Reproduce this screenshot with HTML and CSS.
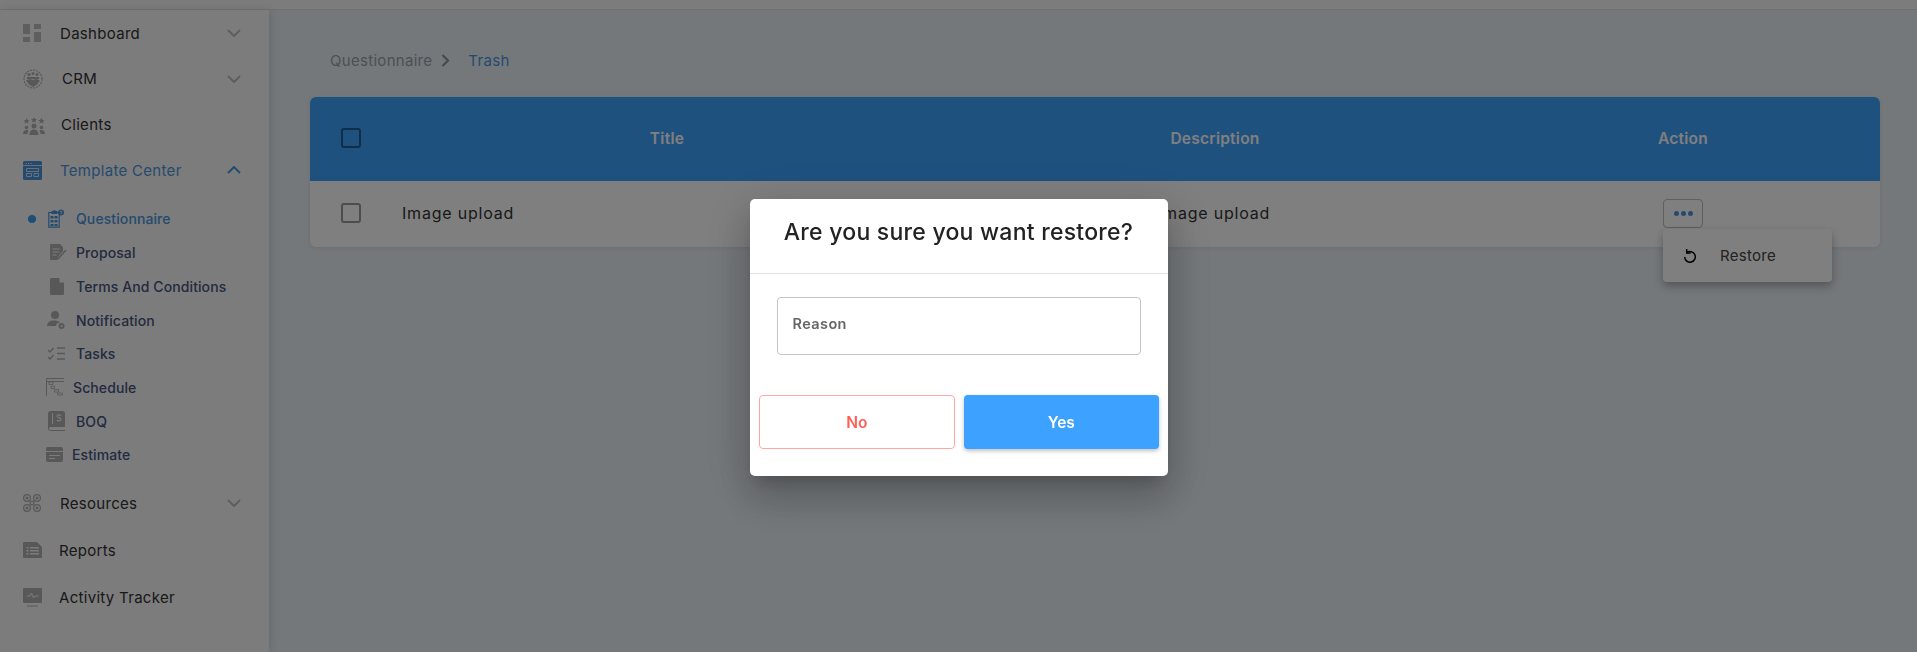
FILE: index.html
```html
<!DOCTYPE html>
<html lang="en">
<head>
  <meta charset="UTF-8">
  <meta name="viewport" content="width=device-width, initial-scale=1.0">
  <title>Questionnaire Trash</title>
  <link rel="stylesheet" href="styles.css">
</head>
<body>

  <div class="topbar"></div>

  <div class="layout">
    <aside class="sidebar">
      <a class="nav-item">
        <svg class="nav-icon" width="18" height="18" viewBox="0 0 18 18"><path fill="#bcbcbc" d="M0 0h7v10H0zM11 0h7v5h-7zM0 13h7v5H0zM11 8h7v10h-7z"/></svg>
        <span class="nav-label label-dashboard">Dashboard</span>
        <svg class="chevron" width="14" height="8" viewBox="0 0 14 8"><path d="M1 1l6 6 6-6" fill="none" stroke="#bcbcbc" stroke-width="2"/></svg>
      </a>
      <a class="nav-item">
        <svg class="nav-icon" width="20" height="22" viewBox="0 0 20 22"><circle cx="10" cy="11" r="9" fill="none" stroke="#b0b0b0" stroke-width="1.200" stroke-dasharray="2 1"/><circle cx="6" cy="6.500" r="1.500" fill="#b0b0b0"/><circle cx="10" cy="5.500" r="1.500" fill="#b0b0b0"/><circle cx="14" cy="6.500" r="1.500" fill="#b0b0b0"/><path fill="#b0b0b0" d="M4 9h12v2H4zM3 12.500l4-1.500 3 1 3-1 4 1.500-3 4-4 2.500-4-2.500z"/></svg>
        <span class="nav-label label-crm">CRM</span>
        <svg class="chevron" width="14" height="8" viewBox="0 0 14 8"><path d="M1 1l6 6 6-6" fill="none" stroke="#bcbcbc" stroke-width="2"/></svg>
      </a>
      <a class="nav-item">
        <svg class="nav-icon" width="22" height="21" viewBox="0 0 22 21"><path fill="#b0b0b0" d="M3.500 4l1 2h2l-1.500 1.500.5 2-2-1-2 1 .5-2L1 6h2zM11 3l1 2h2l-1.500 1.500.5 2-2-1-2 1 .5-2L8 5h2zM18.500 4l1 2h2l-1.500 1.500.5 2-2-1-2 1 .5-2L15 6h2z"/><circle cx="11" cy="12" r="2.500" fill="#b0b0b0"/><path fill="#b0b0b0" d="M6.500 21c0-3.500 2-5.500 4.500-5.500s4.500 2 4.500 5.500z"/><circle cx="3.500" cy="13.500" r="1.800" fill="#b0b0b0"/><circle cx="18.500" cy="13.500" r="1.800" fill="#b0b0b0"/><path fill="#b0b0b0" d="M0 20c0-2.500 1.500-4 3.500-4 1 0 1.500.3 2 .8-.7 1-1 2-1 3.200zM22 20c0-2.500-1.500-4-3.500-4-1 0-1.500.3-2 .8.700 1 1 2 1 3.200z"/></svg>
        <span class="nav-label label-clients">Clients</span>
      </a>
      <a class="nav-item is-active">
        <svg class="nav-icon" width="19" height="19" viewBox="0 0 19 19"><path fill="#4a95dc" d="M1.500 0h16A1.500 1.500 0 0 1 19 1.500V17.500A1.500 1.500 0 0 1 17.500 19h-16A1.500 1.500 0 0 1 0 17.500V1.500A1.500 1.500 0 0 1 1.500 0z"/><path fill="none" stroke="#f8f8f8" stroke-width=".8" d="M0 4.500h19M3.500 7.500h12v3h-12zM3.500 12.500h5v3h-5zM11 12.500h4.500v3H11z"/><path fill="#f8f8f8" d="M2.500 2h1v1h-1zM5 2h1v1H5zM7.500 2h1v1h-1z"/></svg>
        <span class="nav-label label-template">Template Center</span>
        <svg class="chevron" width="14" height="8" viewBox="0 0 14 8"><path d="M1 7l6-6 6 6" fill="none" stroke="#4a95dc" stroke-width="2"/></svg>
      </a>

      <ul class="subnav">
        <li class="sub-item is-active">
          <span class="dot"></span>
          <svg class="icon-q" width="16" height="19" viewBox="0 0 16 19"><path fill="none" stroke="#4a95dc" stroke-width="1.200" d="M.8 3.500h10.400v14.700H.8z"/><path fill="#4a95dc" d="M3.500 2h2a1 1 0 0 1 2 0h2v3h-6zM2.500 7h3v2.500h-3zM6.500 7h3v2.500h-3zM2.500 11h3v2.500h-3zM6.500 11h3v2.500h-3zM2.500 15h3v2h-3zM6.500 15h3v2h-3z"/><circle cx="13" cy="3.500" r="3" fill="#4a95dc"/><path d="M12 3a1 1 0 1 1 1 1v.8" fill="none" stroke="#f8f8f8" stroke-width=".7"/></svg>
          <span>Questionnaire</span>
        </li>
        <li class="sub-item">
          <svg class="icon-p" width="17" height="17" viewBox="0 0 17 17"><path fill="#b0b0b0" d="M1 0h9l3 3v4l-5 6-.5 3H1a1 1 0 0 1-1-1V1a1 1 0 0 1 1-1z"/><path stroke="#f8f8f8" stroke-width="1" d="M2.500 5h7M2.500 8h7M2.500 11h4"/><path stroke="#b0b0b0" stroke-width="1.500" d="M8 15l8-9"/></svg>
          <span>Proposal</span>
        </li>
        <li class="sub-item">
          <svg class="icon-p" width="14" height="17" viewBox="0 0 14 17"><path fill="#b0b0b0" d="M1.500 0H9l5 5v10.500a1.500 1.500 0 0 1-1.500 1.500h-11A1.500 1.500 0 0 1 0 15.500v-14A1.500 1.500 0 0 1 1.500 0z"/><path fill="#f8f8f8" d="M9.500 0v4.500H14v-.5L10 0z"/></svg>
          <span>Terms And Conditions</span>
        </li>
        <li class="sub-item">
          <svg class="icon-n" width="18" height="19" viewBox="0 0 18 19"><circle cx="8" cy="4" r="4" fill="#b0b0b0"/><path fill="#b0b0b0" d="M0 15c0-3.500 3-5.500 7-5.500 2.500 0 4.500.6 6 2-2.500.3-4 1.500-4 3.500z"/><circle cx="14.500" cy="15" r="3" fill="#b0b0b0"/><circle cx="14.500" cy="15" r="1" fill="#f8f8f8"/></svg>
          <span>Notification</span>
        </li>
        <li class="sub-item">
          <svg class="icon-q" width="17" height="13" viewBox="0 0 17 13"><path d="M0 3l2 2 3.500-4M0 10l2 2 3.500-4" fill="none" stroke="#b0b0b0" stroke-width="1.400"/><path d="M9 1h8M9 6.500h8M9 12h8" stroke="#b0b0b0" stroke-width="1.500"/></svg>
          <span>Tasks</span>
        </li>
        <li class="sub-item">
          <svg width="18" height="18" viewBox="0 0 18 18"><path d="M.5 18V.5H18" fill="none" stroke="#b0b0b0"/><path d="M.5 3.500H18" stroke="#b0b0b0"/><path d="M3 4h4v2.500H3zM5 8h3.500v2.500H5zM8.500 11.500h4v2.500h-4zM11.500 15h5v2h-5z" fill="none" stroke="#b0b0b0" stroke-width=".8"/></svg>
          <span class="text-schedule">Schedule</span>
        </li>
        <li class="sub-item">
          <svg class="icon-q" width="17" height="20" viewBox="0 0 17 20"><path fill="#b0b0b0" d="M3 0h12a2 2 0 0 1 2 2v14H2.500A1.500 1.500 0 0 0 1 17.500 1.500 1.500 0 0 0 2.500 19H17v1H3a3 3 0 0 1-3-3V3a3 3 0 0 1 3-3z"/><path fill="#f8f8f8" d="M4 2h1v11H4z"/><path d="M13 5c-1-1.500-4-1.500-4 .3 0 1.700 4 1 4 3 0 1.900-3 2-4 .5" fill="none" stroke="#f8f8f8" stroke-width="1.200"/></svg>
          <span>BOQ</span>
        </li>
        <li class="sub-item">
          <svg width="17" height="15" viewBox="0 0 17 15"><path fill="#b0b0b0" d="M2 0h13a2 2 0 0 1 2 2v11a2 2 0 0 1-2 2H2a2 2 0 0 1-2-2V2a2 2 0 0 1 2-2z"/><path d="M0 4.500h17M3 8.500h11M3 11.500h6" stroke="#f8f8f8" stroke-width="1"/></svg>
          <span class="text-estimate">Estimate</span>
        </li>
      </ul>

      <a class="nav-item nav-item-low">
        <svg class="nav-icon" width="18" height="18" viewBox="0 0 18 18"><g fill="none" stroke="#b0b0b0" stroke-width="1.200"><circle cx="4" cy="4" r="3.400"/><circle cx="14" cy="4" r="3.400"/><circle cx="4" cy="14" r="3.400"/><circle cx="14" cy="14" r="3.400"/><rect x="7.300" y="7.300" width="3.400" height="3.400"/></g><g fill="#b0b0b0"><circle cx="4" cy="4" r="1.500"/><circle cx="14" cy="4" r="1.500"/><circle cx="4" cy="14" r="1.500"/><circle cx="14" cy="14" r="1.500"/></g></svg>
        <span class="nav-label label-dashboard">Resources</span>
        <svg class="chevron" width="14" height="8" viewBox="0 0 14 8"><path d="M1 1l6 6 6-6" fill="none" stroke="#bcbcbc" stroke-width="2"/></svg>
      </a>
      <a class="nav-item nav-item-low">
        <svg class="nav-icon" width="19" height="16" viewBox="0 0 19 16"><path fill="#b0b0b0" d="M0 1a1 1 0 0 1 1-1h13l5 5v10a1 1 0 0 1-1 1H1a1 1 0 0 1-1-1z"/><path d="M3.500 5h2v1.500h-2zM7 5h9v1.500H7zM3.500 8h2v1.500h-2zM7 8h9v1.500H7zM3.500 11h2v1.500h-2zM7 11h9v1.500H7z" fill="#f8f8f8"/></svg>
        <span class="nav-label label-reports">Reports</span>
      </a>
      <a class="nav-item nav-item-low">
        <svg class="nav-icon" width="19" height="19" viewBox="0 0 19 19"><path fill="#b0b0b0" d="M1 0h17a1 1 0 0 1 1 1v13a1 1 0 0 1-1 1H1a1 1 0 0 1-1-1V1a1 1 0 0 1 1-1zM4 17.500h11v1H4z"/><path d="M4 8h3l1.500-3 2 5 1.500-2h3.500" fill="none" stroke="#f8f8f8"/></svg>
        <span class="nav-label label-reports">Activity Tracker</span>
      </a>
    </aside>

    <main class="content">
      <div class="breadcrumb">
        <span>Questionnaire</span>
        <svg width="9" height="13" viewBox="0 0 9 13"><path d="M1.500 1l5.500 5.500L1.500 12" fill="none" stroke="#8e939a" stroke-width="2.200"/></svg>
        <span class="breadcrumb-current">Trash</span>
      </div>

      <div class="table-card">
        <div class="table-head">
          <div class="cell-check"><span class="checkbox checkbox-head"></span></div>
          <div>Title</div>
          <div>Description</div>
          <div class="head-action">Action</div>
        </div>
        <div class="table-row">
          <div class="cell-check"><span class="checkbox"></span></div>
          <div class="cell-title">Image upload</div>
          <div class="cell-desc">Image upload</div>
          <div class="cell-action">
            <button class="more-btn"><i></i><i></i><i></i></button>
            <div class="menu">
              <svg width="14" height="15" viewBox="0 0 14 15"><path d="M3.700 1v4h4" fill="none" stroke="#000" stroke-width="1.500"/><path d="M3.700 4.700A5.300 5.300 0 1 1 1.700 9" fill="none" stroke="#000" stroke-width="1.500"/></svg>
              <span>Restore</span>
            </div>
          </div>
        </div>
      </div>
    </main>
  </div>

  <div class="overlay">
    <div class="modal">
      <h2 class="modal-title">Are you sure you want restore?</h2>
      <div class="modal-body">
        <div class="reason-field">Reason</div>
      </div>
      <div class="modal-actions">
        <button class="btn btn-no">No</button>
        <button class="btn btn-yes">Yes</button>
      </div>
    </div>
  </div>

</body>
</html>
```

FILE: styles.css
```css
/* General Styles */
* {
  box-sizing: border-box;
}

body {
  margin: 0;
  height: 652px;
  overflow: hidden;
  font-family: "Inter", "Open Sans", sans-serif;
  background: #eaf0f6;
}

.topbar {
  height: 10px;
  background: #f8f8f8;
  border-bottom: 1px solid #e0e0e0;
}

.layout {
  display: flex;
  height: 642px;
}

/* Sidebar */
.sidebar {
  width: 269px;
  flex-shrink: 0;
  background: #f8f8f8;
  box-shadow: 2px 0 8px rgba(0, 0, 0, 0.1);
}

.nav-item {
  display: flex;
  align-items: center;
  height: 45.6px;
  padding-top: 1px;
  padding-left: 23px;
  padding-right: 28px;
  font-size: 15px;
  letter-spacing: 0.3px;
  color: #333;
}

.nav-item-low {
  height: 47px;
}

.subnav + .nav-item-low {
  margin-top: 7.75px;
}

.nav-item.is-active {
  color: #4a95dc;
}

.nav-icon {
  flex-shrink: 0;
}

.nav-label {
  flex: 1;
}

.label-dashboard { margin-left: 19px; }
.label-crm { margin-left: 19px; }
.label-clients { margin-left: 16px; }
.label-template { margin-left: 18px; }
.label-reports { margin-left: 17px; }

.subnav {
  list-style: none;
  margin: 0;
  padding: 9.75px 0 0;
}

.sub-item {
  position: relative;
  display: grid;
  grid-template-columns: 30px 1fr;
  align-items: center;
  height: 33.7px;
  padding-left: 46px;
  font-size: 14px;
  font-weight: 500;
  letter-spacing: 0.1px;
  color: #44567f;
}

.sub-item.is-active {
  color: #4a95dc;
}

.icon-q { margin-left: 2px; }
.icon-p { margin-left: 4px; }
.icon-n { margin-left: 1px; }

.text-schedule { margin-left: -3px; }
.text-estimate { margin-left: -4px; }

.dot {
  position: absolute;
  left: 28px;
  top: 13px;
  width: 8px;
  height: 8px;
  border-radius: 50%;
  background: #3e9af0;
}

/* Main content */
.content {
  flex: 1;
  padding: 38px 37px 0 41px;
}

.breadcrumb {
  display: flex;
  align-items: center;
  gap: 9px;
  height: 24px;
  padding-left: 20px;
  font-size: 15px;
  letter-spacing: 0.3px;
  color: #9a9fa6;
}

.breadcrumb-current {
  margin-left: 9px;
  color: #4a95dc;
}

.table-card {
  margin-top: 25px;
  width: 1570px;
  background: #fff;
  border-radius: 6px;
  box-shadow: 0 1px 4px rgba(0, 0, 0, 0.08);
}

.table-head,
.table-row {
  display: grid;
  grid-template-columns: 92px 530px 566px 1fr;
  align-items: center;
}

.table-head {
  height: 84px;
  padding-bottom: 2px;
  background: #3ea2ff;
  border-radius: 6px 6px 0 0;
  color: #fff;
  font-size: 15.5px;
  font-weight: 600;
  letter-spacing: 0.25px;
  text-align: center;
}

.table-row {
  height: 66px;
  padding-bottom: 2px;
  font-size: 16px;
  letter-spacing: 0.8px;
  color: #333;
}

.head-action {
  padding-right: 12px;
}

.cell-check {
  display: flex;
  padding-left: 31px;
}

.checkbox {
  width: 20px;
  height: 20px;
  border: 2px solid #9a9a9a;
  border-radius: 3px;
}

.checkbox-head {
  border-color: #205a94;
}

.cell-desc {
  padding-left: 226px;
}

.cell-action {
  position: relative;
  padding-left: 165px;
}

.more-btn {
  display: flex;
  align-items: center;
  justify-content: center;
  gap: 2px;
  width: 40px;
  height: 29px;
  padding: 0;
  background: transparent;
  border: 1px solid #c0c0c0;
  border-radius: 4px;
}

.more-btn i {
  width: 5px;
  height: 5px;
  border-radius: 50%;
  background: #4a95dc;
}

/* dropdown that hangs from the more button */
.menu {
  position: absolute;
  left: 165px;
  top: 30px;
  display: flex;
  align-items: center;
  gap: 23px;
  width: 169px;
  height: 53px;
  padding-left: 20px;
  background: #fff;
  border-radius: 4px;
  box-shadow: 0 4px 10px rgba(0, 0, 0, 0.3);
  font-size: 15px;
  letter-spacing: 0.3px;
  color: #444;
}

/* Modal */
.overlay {
  position: fixed;
  inset: 0;
  display: flex;
  justify-content: center;
  align-items: flex-start;
  padding-top: 199px;
  background: rgba(0, 0, 0, 0.5);
}

.modal {
  width: 418px;
  height: 277px;
  background: #fff;
  border-radius: 5px;
  box-shadow: 0 11px 15px -7px rgba(0, 0, 0, 0.2), 0 24px 38px 3px rgba(0, 0, 0, 0.14), 0 9px 46px 8px rgba(0, 0, 0, 0.12);
}

.modal-title {
  margin: 0;
  height: 75px;
  padding-top: 18px;
  border-bottom: 1px solid #e0e0e0;
  font-size: 23px;
  font-weight: 500;
  letter-spacing: 0.25px;
  line-height: 30px;
  text-align: center;
  color: #222;
}

.modal-body {
  padding: 23px 27px 0;
}

.reason-field {
  height: 58px;
  padding: 17px 15px 0;
  border: 1px solid #c4c4c4;
  border-radius: 4px;
  font-size: 14.5px;
  font-weight: 600;
  letter-spacing: 0.4px;
  color: #666;
}

.modal-actions {
  display: flex;
  gap: 9px;
  padding: 40px 9px 0;
}

.btn {
  flex: 1;
  height: 54px;
  border-radius: 4px;
  font-family: inherit;
  font-size: 15.5px;
  font-weight: 600;
}

.btn-no {
  background: #fff;
  border: 1px solid #ffa8a3;
  color: #ff5f57;
}

.btn-yes {
  background: #3ca1ff;
  border: none;
  color: #fff;
  box-shadow: 0 2px 4px rgba(0, 0, 0, 0.25);
}
```
